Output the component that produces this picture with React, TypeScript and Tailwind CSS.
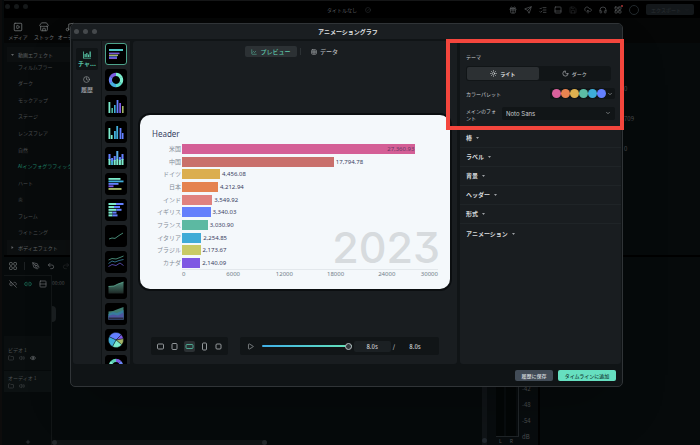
import { useState } from 'react';
import type { ReactNode } from 'react';
import {
  ChartLine, ChevronDown, CircleCheck, Clock, CloudUpload, Eye, Folder, Gift,
  Headphones, LayoutGrid, Link2, Link2Off, ListChecks, Moon, Music, PanelBottom, PenTool, Play, Plus, Redo2,
  Rows2, Save, Send, SquarePlay, Store, Sun, Table, Undo2, Volume2,
} from 'lucide-react';

const effects = [
  'フィルムブラー', 'ダーク', 'モックアップ', 'ステージ', 'レンズフレア', '自然',
  'AIインフォグラフィック', 'ハート', '炎', 'フレーム', 'ライトニング',
];

const chartData = [
  { name: '米国', value: 27360.93, color: '#d45f96', inside: true },
  { name: '中国', value: 17794.78, color: '#c9706c' },
  { name: 'ドイツ', value: 4456.08, color: '#dbae50' },
  { name: '日本', value: 4212.94, color: '#e58350' },
  { name: 'インド', value: 3549.92, color: '#e0827f' },
  { name: 'イギリス', value: 3340.03, color: '#6580fc' },
  { name: 'フランス', value: 3030.9, color: '#5cb9a2' },
  { name: 'イタリア', value: 2254.85, color: '#40abd7' },
  { name: 'ブラジル', value: 2173.67, color: '#c9ca66' },
  { name: 'カナダ', value: 2140.09, color: '#7e58e3' },
];

const axisMax = 30000;
const palette = ['#d9609c', '#e88350', '#ddb04f', '#5cbca5', '#3eacd8', '#6480ff'];
const sections = ['棒', 'ラベル', '背景', 'ヘッダー', '形式', 'アニメーション'];

const formatValue = (value: number) =>
  value.toLocaleString('en-US', { minimumFractionDigits: 2, maximumFractionDigits: 2 });

type Box = [x: number, y: number, w: number, h: number, fill: string];

function Boxes({ items }: { items: Box[] }) {
  return (
    <>
      {items.map(([x, y, w, h, fill], i) => (
        <rect key={i} x={x} y={y} width={w} height={h} fill={fill} />
      ))}
    </>
  );
}

function Ring({ colors }: { colors: string[] }) {
  return (
    <>
      {colors.map((color, i) => (
        <circle
          key={i}
          cx="8" cy="8" r="5.6" fill="none" stroke={color} strokeWidth="3.2" pathLength="100"
          strokeDasharray={`${100 / colors.length + 0.5} 100`}
          strokeDashoffset={-(100 / colors.length) * i}
          transform="rotate(-90 8 8)"
        />
      ))}
    </>
  );
}

const templates: { label: string; art: ReactNode }[] = [
  {
    label: '横棒レース',
    art: <Boxes items={[[1, 3, 14, 2, '#4fc6c4'], [1, 6.6, 10.5, 1.6, '#7656d8'], [1, 8.6, 9, 1.5, '#a3b567'], [1, 10.4, 8, 1.5, '#5d6fe8'], [1, 12, 8, 1, '#7d55c8']]} />,
  },
  { label: 'ドーナツ', art: <Ring colors={['#7ceccd', '#7ceccd', '#5bdcc8', '#46aee0', '#6a84f5', '#7a5be0']} /> },
  {
    label: '縦棒',
    art: <Boxes items={[[0.5, 4, 1.8, 11, '#7ceccd'], [3.4, 10, 1.6, 5, '#4fb79e'], [6, 7, 1.6, 8, '#41aedb'], [8.6, 2, 1.8, 13, '#6480ff'], [11.2, 5, 1.8, 10, '#7e58e3'], [14, 8, 1.6, 7, '#a3b567']]} />,
  },
  {
    label: 'グループ縦棒',
    art: <Boxes items={[[0.5, 4, 1.8, 11, '#7ceccd'], [2.8, 11, 1.8, 4, '#7ceccd'], [6, 7, 1.8, 8, '#41aedb'], [8.3, 2, 1.8, 13, '#41aedb'], [11.6, 4, 1.8, 11, '#6480ff'], [13.9, 9, 1.6, 6, '#6480ff']]} />,
  },
  {
    label: '積み上げ縦棒',
    art: <Boxes items={[[0.5, 4, 2, 6, '#6480ff'], [0.5, 9, 2, 6, '#7ceccd'], [3.1, 8, 2, 4, '#6480ff'], [3.1, 11, 2, 4, '#41aedb'], [5.7, 6, 2, 5, '#6480ff'], [5.7, 10, 2, 5, '#7ceccd'], [8.3, 1, 2, 8, '#5db0ef'], [8.3, 9, 2, 6, '#7ceccd'], [10.9, 7, 2, 4, '#6480ff'], [10.9, 10, 2, 5, '#7ceccd'], [13.5, 4, 2, 6, '#6480ff'], [13.5, 9, 2, 6, '#7ceccd']]} />,
  },
  {
    label: '横棒',
    art: <Boxes items={[[0.5, 2, 12, 1.8, '#7ceccd'], [0.5, 4.5, 15, 1.8, '#41aedb'], [0.5, 7, 10, 1.8, '#6480ff'], [0.5, 9.4, 5, 1.8, '#7e58e3'], [0.5, 12, 13, 1.9, '#a3b567']]} />,
  },
  {
    label: '積み上げ横棒',
    art: <Boxes items={[[0.5, 1, 8, 2, '#7ceccd'], [8, 1, 7.5, 2, '#6480ff'], [0.5, 4, 6, 2, '#7ceccd'], [6, 4, 6, 2, '#6480ff'], [0.5, 6.8, 8, 2, '#7ceccd'], [8.5, 6.8, 5, 2, '#6480ff'], [0.5, 9.6, 4, 2, '#7ceccd'], [4.5, 9.6, 4, 2, '#6480ff'], [0.5, 12.4, 4, 2, '#7ceccd'], [4.5, 12.4, 5, 2, '#6480ff']]} />,
  },
  { label: '折れ線', art: <path d="M1 11 L4 10 L7 10.4 L11 7.5 L15 5" fill="none" stroke="#4e9580" strokeWidth="0.9" /> },
  {
    label: '複数折れ線',
    art: (
      <g fill="none" strokeWidth="0.8">
        <path d="M0.5 6 L4 4.5 L8 5 L12 3.5 L15.5 2" stroke="#54a58d" />
        <path d="M0.5 9.5 L4 7 L7 8 L11 6.5 L15.5 5.5" stroke="#3b86a5" />
        <path d="M0.5 12.5 L4 10.5 L8 11.5 L12 9 L15.5 11.5" stroke="#6658c7" />
      </g>
    ),
  },
  {
    label: '面',
    art: (
      <>
        <defs>
          <linearGradient id="area" x1="0" y1="0" x2="0" y2="1">
            <stop offset="0" stopColor="#4a8474" />
            <stop offset="1" stopColor="#1d2725" />
          </linearGradient>
        </defs>
        <path d="M0.5 6.5 L6 6 L10 4 L15.5 2 V13.5 H0.5Z" fill="url(#area)" />
        <path d="M0.5 6.5 L6 6 L10 4 L15.5 2" fill="none" stroke="#5fae96" strokeWidth="0.8" />
      </>
    ),
  },
  {
    label: '積み上げ面',
    art: (
      <>
        <path d="M0.5 5.5 L5 5 L10 3 L15.5 1 V13.5 H0.5Z" fill="#3f7c71" />
        <path d="M0.5 8 L5 6 L9 7 L15.5 4 V13.5 H0.5Z" fill="#377c9e" />
        <path d="M0.5 10 L5 8.5 L10 9.5 L15.5 6.5 V13.5 H0.5Z" fill="#4d56a0" />
        <path d="M0.5 11.5 H15.5 V13.5 H0.5Z" fill="#2a2c45" />
      </>
    ),
  },
  {
    label: '円',
    art: (
      <g stroke="#0c1316" strokeWidth="0.4">
        <path d="M8 8 L1.2 4.8 A7.5 7.5 0 0 1 13.3 2.7Z" fill="#6480ff" />
        <path d="M8 8 L13.3 2.7 A7.5 7.5 0 0 1 15.4 6.8Z" fill="#7e58e3" />
        <path d="M8 8 L15.4 6.8 A7.5 7.5 0 0 1 13.8 12.8Z" fill="#a3b567" />
        <path d="M8 8 L13.8 12.8 A7.5 7.5 0 0 1 4.4 14.6Z" fill="#7ceccd" />
        <path d="M8 8 L4.4 14.6 A7.5 7.5 0 0 1 1.2 4.8Z" fill="#41aedb" />
      </g>
    ),
  },
  { label: 'ゲージ', art: <Ring colors={['#7a5be0', '#6a84f5', '#46aee0', '#5bdcc8', '#7ceccd', '#7ceccd', '#7ceccd', '#5bd0b5']} /> },
];

const ratios = [
  { label: '4:3', w: 6, h: 5 },
  { label: '3:4', w: 5, h: 6 },
  { label: '16:9', w: 7, h: 4 },
  { label: '9:16', w: 4, h: 7 },
  { label: '1:1', w: 5, h: 5 },
];

function WindowDots({ className }: { className: string }) {
  return (
    <div className="flex gap-1">
      {[0, 1, 2].map((i) => (
        <span key={i} className={`size-[5px] rounded-full ${className}`} />
      ))}
    </div>
  );
}

function PanelsIcon() {
  return (
    <svg viewBox="0 0 16 16" className="size-2" fill="none" stroke="currentColor" strokeWidth="1.6">
      <rect x="1" y="1" width="5.5" height="5.5" rx="1.5" />
      <rect x="9.5" y="1" width="5.5" height="5.5" rx="1.5" />
      <rect x="1" y="9.5" width="5.5" height="5.5" rx="1.5" />
      <rect x="9.5" y="9.5" width="5.5" height="5.5" rx="1.5" />
    </svg>
  );
}

function Editor() {
  return (
    <div className="flex min-h-screen flex-col border-l-2 border-[#0d0c0c] bg-[#060a0b] pl-[2px] text-[#4b4e50]">
      <header className="grid h-[18px] grid-cols-[1fr_auto_1fr] items-center border-t border-[#151617] bg-black pr-[6px]">
        <div className="self-start pt-[3px] pl-px">
          <WindowDots className="bg-[#151819]" />
        </div>
        <div className="flex items-center gap-2">
          <h1 className="text-[#5b5e60]">タイトルなし</h1>
          <CircleCheck className="size-[6px] text-[#33373a]" />
        </div>
        <div className="flex items-center justify-end gap-[7px] text-[#5d6163]">
          <Gift className="size-2" />
          <Send className="size-2" />
          <ListChecks className="size-2" />
          <PanelBottom className="size-2" />
          <Save className="size-2 text-[#27292b]" />
          <CloudUpload className="size-2" />
          <Headphones className="size-2" />
          <span className="relative">
            <LayoutGrid className="size-2" />
            <span className="absolute -top-px -right-px size-[2px] rounded-full bg-[#a33]" />
          </span>
          <span className="size-[10px] rounded-full border border-[#22292d]" />
          <button className="flex h-[11px] w-12 items-center justify-center gap-1 rounded-[2px] bg-[#14181b] text-[#2a2f33]">
            エクスポート
            <ChevronDown className="size-1" />
          </button>
        </div>
      </header>

      <nav className="flex h-[25px] items-center bg-[#050606] pl-px text-[#707375]">
        <button className="flex w-[26px] flex-col items-center gap-px">
          <SquarePlay className="size-[10px]" />
          メディア
        </button>
        <button className="flex w-[26px] flex-col items-center gap-px">
          <Store className="size-[10px]" />
          ストック
        </button>
        <button className="flex w-[26px] flex-col items-center gap-px whitespace-nowrap">
          <Music className="size-[10px]" />
          オーディオ
        </button>
      </nav>

      <div className="flex flex-1">
        <aside className="flex w-[66px] flex-col overflow-hidden bg-[#080b0c] pl-[3px]">
          <button className="mt-1 flex h-[15px] items-center gap-1 bg-[#0c0f10] pl-1 text-[#606365]">
            <svg viewBox="0 0 6 4" className="h-[2px] w-[3px]" fill="currentColor">
              <path d="M0 0h6L3 4z" />
            </svg>
            動画エフェクト
          </button>
          <ul className="-mt-1 flex flex-1 flex-col">
            {effects.map((name) => (
              <li key={name} className="flex flex-1 items-center">
                <button className={`pl-[11px] whitespace-nowrap ${name.startsWith('AI') ? 'text-[#1f8065]' : ''}`}>
                  {name}
                </button>
              </li>
            ))}
          </ul>
          <button className="flex h-[15px] items-center gap-1 bg-[#0c0f10] pl-1 whitespace-nowrap text-[#606365]">
            <svg viewBox="0 0 4 6" className="h-[3px] w-[3px]" fill="currentColor">
              <path d="M0 0v6L4 3z" />
            </svg>
            ボディエフェクト
          </button>
        </aside>
        <div className="flex flex-1 justify-end">
          <ul className="flex w-[76px] flex-col gap-[23px] pt-[42px] text-[6px]">
            <li>0</li>
            <li>709</li>
            <li>0</li>
          </ul>
        </div>
      </div>

      <div className="flex h-[190px] flex-col border-t-2 border-black bg-[#060a0b]">
        <div className="flex h-[18px] items-center gap-[7px] pl-[5px] text-[#6f7375]">
          <PanelsIcon />
          <span className="h-2 w-px bg-[#1d2123]" />
          <PenTool className="size-2" />
          <Undo2 className="size-2" />
          <Redo2 className="size-2 text-[#25282a]" />
        </div>
        <div className="flex flex-1">
          <div className="flex w-12 flex-col border-t border-r border-[#121617]">
            <div className="flex h-[15px] items-center gap-[7px] pl-[5px] text-[#6f7375]">
              <Link2Off className="size-2" />
              <Link2 className="size-2 text-[#1f8065]" />
              <Rows2 className="size-2" />
            </div>
            <div className="mt-auto flex h-[34px] flex-col justify-end gap-[2px] bg-[#0a0e0f] pb-[9px] pl-1">
              <p className="leading-[7px]">ビデオ 1</p>
              <div className="flex gap-[5px]">
                <Folder className="size-[6px]" />
                <Volume2 className="size-[6px]" />
                <Eye className="size-[6px] text-[#83878a]" />
              </div>
            </div>
            <div className="mt-px mb-[47px] flex h-[21px] flex-col justify-center gap-[2px] bg-[#0c1112] pl-1">
              <p className="leading-[7px]">オーディオ 1</p>
              <div className="flex gap-[5px]">
                <Folder className="size-[6px]" />
                <Volume2 className="size-[6px]" />
              </div>
            </div>
            <button aria-label="トラックを追加" className="self-center">
              <Plus className="size-[6px]" />
            </button>
          </div>
          <div className="flex flex-1 flex-col">
            <span className="pt-1">00:00</span>
            <span className="mt-5 h-4 w-1 rounded-r-full bg-[#1a1f21]" />
            <div className="mt-auto flex h-[5px] w-1/2 items-center justify-between rounded-full bg-[#101415]">
              <span className="size-[5px] rounded-full bg-[#23282b]" />
              <span className="size-[5px] rounded-full bg-[#23282b]" />
            </div>
          </div>
          <div className="flex w-[58px] gap-[9px] border-r-2 border-black bg-[#080c0e]">
            <div className="flex w-[5px] items-end bg-[#101417] pb-[2px]">
              <span className="size-[5px] rounded-full bg-[#22282e]" />
            </div>
            <div className="flex flex-1 gap-[3px]">
              <div className="flex flex-col">
                <div className="flex flex-1 gap-[2px] border-b border-[#1f2427]">
                  <span className="w-2 bg-[#030606]" />
                  <span className="w-[10px] bg-[#030606]" />
                  <span className="w-px bg-[#22272a]" />
                </div>
                <div className="flex h-2 gap-2 pl-[3px] leading-[8px]">
                  <span>L</span>
                  <span>R</span>
                </div>
              </div>
              <div className="flex flex-col justify-end gap-[9px] pb-[5px] text-[6px] leading-[7px]">
                <span>-42</span>
                <span>-48</span>
                <span>-54</span>
                <span>dB</span>
              </div>
            </div>
          </div>
          <div className="w-[23%]" />
        </div>
      </div>
    </div>
  );
}

function BarRace() {
  return (
    <figure className="relative flex aspect-video w-full flex-col rounded-[10px] bg-[#f4f8fb] px-3 pt-[13px] pb-[11px] font-['Noto_Sans','Noto_Sans_CJK_JP',sans-serif] text-[6px] leading-[8px] ring-2 ring-[#0b0e10]">
      <figcaption className="text-[8px] leading-[12px] text-[#36415f]">Header</figcaption>
      <div className="mt-[3px] flex flex-1 flex-col">
        {chartData.map((row) => (
          <div key={row.name} className="flex flex-1 items-center">
            <span className="w-[30px] pr-px text-right text-[#858d99]">{row.name}</span>
            <div className="flex flex-1 items-center gap-[2px] text-[#39415f]">
              <div
                className="flex h-[10px] shrink-0 items-center justify-end pr-px"
                style={{ width: `${(row.value / axisMax) * 100}%`, backgroundColor: row.color }}
              >
                {row.inside && <span className="text-[#6a3765]">{formatValue(row.value)}</span>}
              </div>
              {!row.inside && <span>{formatValue(row.value)}</span>}
            </div>
          </div>
        ))}
      </div>
      <div className="ml-[30px] flex border-t border-[#e3e8ec] text-[#717d8a]">
        <span className="w-[10%]">0</span>
        {[6000, 12000, 18000, 24000].map((tick) => (
          <span key={tick} className="w-1/5 text-center">{tick}</span>
        ))}
        <span className="w-[10%] text-right">{axisMax}</span>
      </div>
      <span className="pointer-events-none absolute right-[10px] bottom-[26px] font-['Inter',sans-serif] text-[43px] leading-[32px] font-medium text-[#d7dbde] [font-feature-settings:'cv09']">
        2023
      </span>
    </figure>
  );
}

function GraphDialog() {
  const [template, setTemplate] = useState(0);
  const [ratio, setRatio] = useState(2);
  const [theme, setTheme] = useState('light');
  const [position, setPosition] = useState(8);

  return (
    <div
      role="dialog"
      aria-labelledby="dialog-title"
      className="absolute top-[23px] right-[11%] bottom-[58px] left-[10%] flex flex-col overflow-hidden rounded-[5px] border border-[#303437] bg-[#101416] text-[#c8cccf] shadow-2xl"
    >
      <header className="grid h-[15px] shrink-0 grid-cols-[1fr_auto_1fr] items-center bg-[#1a1e21] pl-[3px]">
        <WindowDots className="bg-[#45494c]" />
        <h2 id="dialog-title" className="text-[6px] font-bold text-[#e0e3e5]">アニメーショングラフ</h2>
      </header>

      <div className="flex min-h-0 flex-1 pt-[2px] pr-px pl-[2px]">
        <nav className="flex w-[28px] shrink-0 flex-col items-center gap-[6px] rounded-bl-[3px] bg-[#191d20] pt-[7px]">
          <button className="flex h-[22px] w-[22px] flex-col items-center justify-center gap-px rounded-[2px] bg-[#101416] text-[6px] font-bold text-[#56c3a5]">
            <svg viewBox="0 0 16 16" className="size-2" fill="currentColor">
              <path d="M0 1h1.6v12.4H16V15H0zM3 6h2.5v6H3zM6.5 4H9v8H6.5zM10 7h2v5h-2zM13 1h2.6v11H13z" />
            </svg>
            チャ...
          </button>
          <button className="flex flex-col items-center gap-[3px] text-[6px] font-medium text-[#a4a8ab]">
            <Clock className="size-[7px]" />
            履歴
          </button>
        </nav>

        <div className="ml-px flex w-[28px] shrink-0 flex-col gap-1 overflow-hidden bg-[#1c2023] pt-[2px] pl-[3px]">
          {templates.map((item, i) => (
            <button
              key={item.label}
              aria-label={item.label}
              onClick={() => setTemplate(i)}
              className={`flex size-[22px] shrink-0 items-center justify-center rounded-[3px] border bg-black ${
                template === i ? 'border-[#4da38b]' : 'border-black'
              }`}
            >
              <svg viewBox="0 0 16 16" className="size-4">{item.art}</svg>
            </button>
          ))}
        </div>

        <main className="ml-[3px] flex min-w-0 flex-1 flex-col rounded-[3px] bg-[#191d20] px-[7px] pt-[5px] pb-[9px]">
          <div className="flex items-center justify-center gap-[3px]">
            <button className="flex h-[11px] w-[52px] items-center justify-center gap-[3px] rounded-[2px] bg-[#2c3134] text-[6px] font-medium text-[#5fc9ad]">
              <ChartLine className="size-[6px]" />
              プレビュー
            </button>
            <span className="h-[7px] w-px bg-[#2c3134]" />
            <button className="flex h-[11px] w-[41px] items-center justify-center gap-[3px] text-[6px] font-medium text-[#b6babd]">
              <Table className="size-[6px]" />
              データ
            </button>
          </div>

          <div className="flex flex-1 items-center pt-[10px]">
            <BarRace />
          </div>

          <div className="flex h-[18px] items-center gap-3 px-[11px]">
            <div className="flex h-full w-[77px] shrink-0 items-center justify-around rounded-[2px] bg-[#111517] px-[2px]">
              {ratios.map((item, i) => (
                <button
                  key={item.label}
                  aria-label={item.label}
                  onClick={() => setRatio(i)}
                  className={`flex size-[11px] items-center justify-center rounded-[2px] ${
                    ratio === i ? 'bg-[#2b3033] text-[#4fb79c]' : 'text-[#a2a6a9]'
                  }`}
                >
                  <svg viewBox="0 0 9 9" className="size-[9px]" fill="none" stroke="currentColor" strokeWidth="0.9">
                    <rect x={(9 - item.w) / 2} y={(9 - item.h) / 2} width={item.w} height={item.h} rx="1" />
                  </svg>
                </button>
              ))}
            </div>
            <div className="flex h-full min-w-0 flex-1 items-center rounded-[2px] bg-[#111517] pr-1 pl-[7px] text-[6px] font-medium">
              <button aria-label="再生" className="mr-2">
                <Play className="size-[7px] text-[#b9bdc0]" />
              </button>
              <input
                type="range"
                aria-label="再生位置"
                min={0}
                max={8}
                step={0.1}
                value={position}
                onChange={(e) => setPosition(Number(e.target.value))}
                className="h-[2px] min-w-0 flex-1 appearance-none rounded-full bg-linear-to-r from-[#41b0e8] to-[#66e3b4] [&::-webkit-slider-thumb]:size-[7px] [&::-webkit-slider-thumb]:appearance-none [&::-webkit-slider-thumb]:rounded-full [&::-webkit-slider-thumb]:border [&::-webkit-slider-thumb]:border-[#b9c0c4] [&::-webkit-slider-thumb]:bg-[#343a3e]"
              />
              <input
                aria-label="現在の時間"
                value={`${position.toFixed(1)}s`}
                readOnly
                className="ml-[2px] h-[11px] w-[37px] rounded-[2px] bg-[#1b2023] text-center"
              />
              <span className="ml-[2px]">/</span>
              <span className="w-10 text-center">8.0s</span>
            </div>
          </div>
        </main>

        <aside className="ml-[3px] w-[161px] shrink-0 rounded-[3px] bg-[#191d20]">
          <div className="flex h-[88px] flex-col border-b border-[#22272a] px-[6px] pt-3">
            <p className="leading-[8px]">テーマ</p>
            <div className="mt-[5px] mr-1 flex h-[15px] rounded-[3px] bg-[#111517] p-px">
              <button
                onClick={() => setTheme('light')}
                className={`flex flex-1 items-center justify-center gap-[3px] rounded-[2px] ${theme === 'light' ? 'bg-[#2c3033] font-bold text-[#e4e7e9]' : ''}`}
              >
                <Sun className="size-[7px]" />
                ライト
              </button>
              <button
                onClick={() => setTheme('dark')}
                className={`flex flex-1 items-center justify-center gap-[3px] rounded-[2px] ${theme === 'dark' ? 'bg-[#2c3033] font-bold text-[#e4e7e9]' : ''}`}
              >
                <Moon className="size-[7px]" />
                ダーク
              </button>
            </div>
            <div className="mt-[7px] flex h-[11px] items-center justify-between">
              <span>カラーパレット</span>
              <button aria-label="カラーパレット" className="flex h-[11px] items-center rounded-[2px] bg-[#111517] px-[2px]">
                {palette.map((color) => (
                  <span key={color} className="size-[9px] rounded-full" style={{ backgroundColor: color }} />
                ))}
                <ChevronDown className="ml-px size-[6px]" />
              </button>
            </div>
            <div className="mt-2 flex h-[13px] items-center gap-[2px]">
              <label htmlFor="font" className="w-[34px] leading-[7px]">メインのフォント</label>
              <div className="relative flex-1">
                <select id="font" className="h-[13px] w-full appearance-none rounded-[2px] bg-[#111517] pl-1 font-['Inter',sans-serif] text-[6px]">
                  <option>Noto Sans</option>
                </select>
                <ChevronDown className="pointer-events-none absolute top-[3px] right-1 size-[6px]" />
              </div>
            </div>
          </div>
          {sections.map((name) => (
            <button
              key={name}
              className="flex h-[19px] w-full items-center gap-1 border-b border-[#1f2427] pl-[6px] text-[6px] leading-[8px] font-bold text-[#d8dbdd] last:border-0"
            >
              {name}
              <svg viewBox="0 0 6 4" className="h-[2px] w-[3px] text-[#9a9ea1]" fill="currentColor">
                <path d="M0 0h6L3 4z" />
              </svg>
            </button>
          ))}
        </aside>
      </div>

      <footer className="flex h-[22px] shrink-0 items-center justify-end gap-[5px] pr-[6px] font-medium">
        <button className="h-[11px] w-[38px] rounded-[2px] bg-[#424c57] text-[#d4d8dc]">履歴に保存</button>
        <button className="h-[11px] w-[58px] rounded-[2px] bg-[#66dfc0] text-[#17453a]">タイムラインに追加</button>
      </footer>
    </div>
  );
}

export default function App() {
  return (
    <div className="relative overflow-hidden bg-[#060a0b] font-['Noto_Sans_CJK_JP',sans-serif] text-[5px] leading-[7px]">
      <Editor />
      <GraphDialog />
      {/* highlight around the theme settings */}
      <div className="pointer-events-none absolute top-[39px] right-[76px] h-[91px] w-[178px] border-4 border-[#f4463d]" />
    </div>
  );
}
